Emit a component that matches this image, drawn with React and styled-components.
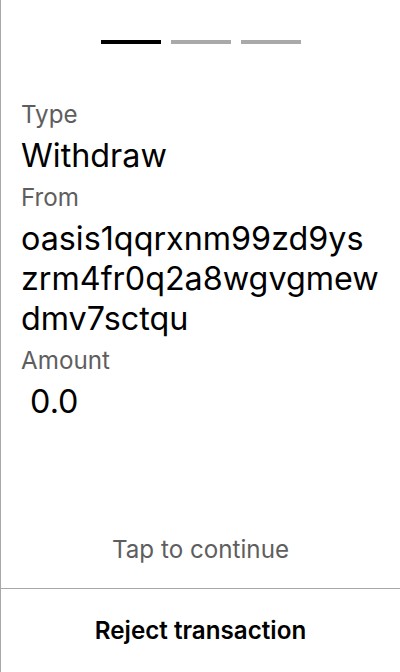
import React from "react";
import styled, { createGlobalStyle } from "styled-components";

const GlobalStyle = createGlobalStyle`
  html, body {
    margin: 0;
    padding: 0;
    background: #fff;
  }
  body {
    font-family: Inter, "Noto Sans", "Liberation Sans", sans-serif;
  }
`;

const Screen = styled.div`
  display: flex;
  flex-direction: column;
  height: 672px;
  box-sizing: border-box;
  border-left: 1px solid #a8a8a8;
  background: #fff;
`;

const Steps = styled.div`
  display: flex;
  justify-content: center;
  gap: 10px;
  padding-top: 40px;
`;

const Step = styled.div`
  width: 60px;
  height: 4px;
  background: ${(p) => (p.$active ? "#000" : "#a9a9a9")};
`;

const Details = styled.div`
  display: flex;
  flex-direction: column;
  padding: 57px 20px 0 20px;
  flex: 1;
`;

const Label = styled.div`
  font-size: 24.2px;
  line-height: 28px;
  color: #5e5e5e;
  margin-top: 8px;
  &:first-child {
    margin-top: 0;
  }
`;

const Value = styled.div`
  font-size: 32.3px;
  line-height: 40px;
  color: #000;
  margin-top: 7px;
  word-break: break-all;
`;

const Hint = styled.div`
  text-align: center;
  font-size: 24.2px;
  line-height: 28px;
  color: #5e5e5e;
  padding-bottom: 24px;
`;

const RejectButton = styled.button`
  display: block;
  width: 100%;
  height: 84px;
  border: none;
  border-top: 1px solid #a8a8a8;
  background: #fff;
  font-family: inherit;
  font-size: 24.2px;
  font-weight: 600;
  color: #000;
  padding: 0;
  cursor: pointer;
`;

const fields = [
  { label: "Type", value: "Withdraw" },
  { label: "From", value: "oasis1qqrxnm99zd9yszrm4fr0q2a8wgvgmewdmv7sctqu" },
  { label: "Amount", value: "\u00a00.0" },
];

export default function App() {
  return (
    <>
      <GlobalStyle />
      <Screen>
        <Steps>
          <Step $active />
          <Step />
          <Step />
        </Steps>
        <Details>
          {fields.map((f) => (
            <React.Fragment key={f.label}>
              <Label>{f.label}</Label>
              <Value>{f.value}</Value>
            </React.Fragment>
          ))}
        </Details>
        <Hint>Tap to continue</Hint>
        <RejectButton>Reject transaction</RejectButton>
      </Screen>
    </>
  );
}
